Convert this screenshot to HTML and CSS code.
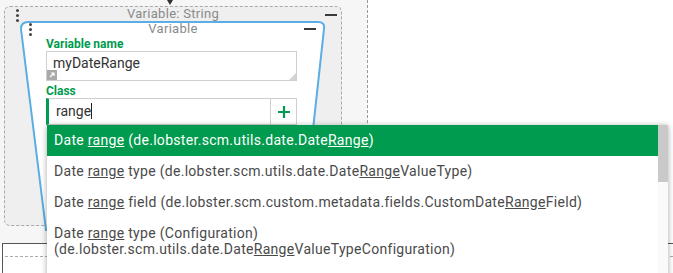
FILE: index.html
```html
<!DOCTYPE html>
<html lang="en">
<head>
  <meta charset="UTF-8">
  <title>Variable block</title>
  <link rel="stylesheet" href="styles.css">
</head>
<body>
  <div class="stage">
    <div class="lane">
      <span class="lane-arrow"></span>
      <div class="block">
        <div class="block-head">
          <span class="grip"></span>
          <span class="block-title">Variable: String</span>
          <span class="collapse"></span>
        </div>
        <div class="card">
          <svg class="card-shape" width="320" height="210" viewBox="0 0 320 210">
            <path d="M8 1 H298 Q305 1 304 8 L282 209 H26 L1 8 Q1 1 8 1 Z" fill="#fff" stroke="#5aaee4" stroke-width="2"/>
          </svg>
          <div class="card-head">
            <span class="grip"></span>
            <span class="card-title">Variable</span>
            <span class="collapse"></span>
          </div>
          <div class="field">
            <div class="field-label">Variable name</div>
            <div class="textarea">
              myDateRange
              <span class="expand-icon">
                <svg width="10" height="10" viewBox="0 0 10 10"><rect width="10" height="10" fill="#a9a9a9"/><path d="M3 7 L7 3 M4 3 H7 V6" stroke="#fff" stroke-width="1.2" fill="none"/></svg>
              </span>
              <span class="resize-grip"></span>
            </div>
          </div>
          <div class="field">
            <div class="field-label">Class</div>
            <div class="combo">
              <span class="combo-text">range<span class="caret"></span></span>
              <span class="combo-add">
                <svg width="14" height="14" viewBox="0 0 14 14"><path d="M7 1 V13 M1 7 H13" stroke="#009b4e" stroke-width="2.2"/></svg>
              </span>
            </div>
          </div>
        </div>
      </div>
    </div>
    <div class="next-block"><span class="next-dash"></span></div>

    <div class="suggest">
      <ul class="suggest-list">
        <li class="active">Date <u>range</u> (de.lobster.scm.utils.date.Date<u>Range</u>)</li>
        <li>Date <u>range</u> type (de.lobster.scm.utils.date.Date<u>Range</u>ValueType)</li>
        <li>Date <u>range</u> field (de.lobster.scm.custom.metadata.fields.CustomDate<u>Range</u>Field)</li>
        <li>Date <u>range</u> type (Configuration)<br>(de.lobster.scm.utils.date.Date<u>Range</u>ValueTypeConfiguration)</li>
      </ul>
      <div class="scrollbar"><span class="thumb"></span></div>
    </div>
  </div>
</body>
</html>
```

FILE: styles.css
```css
body {
  margin: 0;
  font-family: Roboto, "Liberation Sans", sans-serif;
  background: #fff;
  overflow: hidden;
}
.stage {
  position: relative;
  width: 673px;
  height: 273px;
  overflow: hidden;
}
.lane {
  position: relative;
  width: 367px;
  height: 243px;
  background: #f6f6f6;
  border-right: 1px dashed #9a9a9a;
}
.lane-arrow {
  position: absolute;
  left: 167px;
  top: 0;
  border-left: 3px solid transparent;
  border-right: 3px solid transparent;
  border-top: 5px solid #333;
}
.block {
  position: absolute;
  left: 4px;
  top: 6px;
  width: 336px;
  height: 218px;
  background: #efefef;
  border: 1px dashed #a8a8a8;
  border-radius: 6px;
}
.block-head {
  position: relative;
  height: 14px;
  text-align: center;
  font-size: 13px;
  line-height: 14px;
  letter-spacing: 0.3px;
}
.block-title,
.card-title {
  position: relative;
  color: #8a8a8a;
}
.grip {
  position: absolute;
  left: 11px;
  top: 2px;
  width: 3px;
  height: 3px;
  border-radius: 50%;
  background: #444;
  box-shadow: 0 5px 0 #444, 0 10px 0 #444;
}
.collapse {
  position: absolute;
  right: 4px;
  top: 7px;
  width: 12px;
  height: 2px;
  background: #3a3a3a;
}
.card {
  position: relative;
  margin-left: 15px;
  width: 306px;
  height: 204px;
}
.card-shape {
  position: absolute;
  left: 0;
  top: 0;
}
.card-head {
  position: relative;
  height: 15px;
  padding-top: 1px;
  text-align: center;
  font-size: 13px;
  line-height: 14px;
  letter-spacing: 0.3px;
}
.card-head .grip {
  left: 9px;
  top: 2px;
}
.card-head .collapse {
  right: 10px;
  top: 7px;
}
.field {
  position: relative;
  margin-left: 26px;
  width: 251px;
}
.field-label {
  font-size: 12px;
  font-weight: bold;
  line-height: 14px;
  color: #009b4e;
}
.field + .field {
  margin-top: 3px;
}
.textarea {
  position: relative;
  height: 28px;
  border: 1px solid #cfcfcf;
  background: #fff;
  padding: 0 6px;
  font-size: 14px;
  line-height: 22px;
  color: #333;
}
.expand-icon {
  position: absolute;
  left: 0;
  bottom: 0;
  height: 10px;
}
.expand-icon svg {
  display: block;
}
.resize-grip {
  position: absolute;
  right: 0;
  bottom: 0;
  border-left: 7px solid transparent;
  border-bottom: 7px solid #d4d4d4;
}
.combo {
  display: flex;
  height: 25px;
  border: 1px solid #cfcfcf;
  border-left: 3px solid #009b4e;
  background: #fff;
}
.combo-text {
  flex: 1;
  padding-left: 7px;
  font-size: 14px;
  line-height: 24px;
  color: #333;
}
.caret {
  display: inline-block;
  width: 1px;
  height: 16px;
  background: #222;
  vertical-align: -3px;
}
.combo-add {
  display: flex;
  align-items: center;
  justify-content: center;
  width: 25px;
  border-left: 1px solid #cfcfcf;
}
.next-block {
  position: relative;
  margin-left: 2px;
  height: 30px;
  border-top: 1px solid #555;
  border-left: 1px solid #555;
}
.next-dash {
  position: absolute;
  left: 2px;
  right: 0;
  top: 12px;
  border-top: 1px dashed #aaa;
}
.suggest {
  position: absolute;
  left: 47px;
  top: 125px;
  width: 621px;
  height: 160px;
  display: flex;
  background: #fff;
  box-shadow: 0 1px 6px rgba(0, 0, 0, 0.35);
}
.suggest-list {
  flex: 1;
  margin: 0;
  padding: 0;
  list-style: none;
}
.suggest-list li {
  padding: 7px 7px 8px;
  font-size: 14px;
  line-height: 16px;
  letter-spacing: 0.3px;
  color: #4a4a4a;
  white-space: nowrap;
}
.suggest-list li.active {
  background: #009b4e;
  color: #fff;
}
.scrollbar {
  width: 10px;
  background: #fafafa;
}
.thumb {
  display: block;
  height: 57px;
  background: #c9c9c9;
}
```
